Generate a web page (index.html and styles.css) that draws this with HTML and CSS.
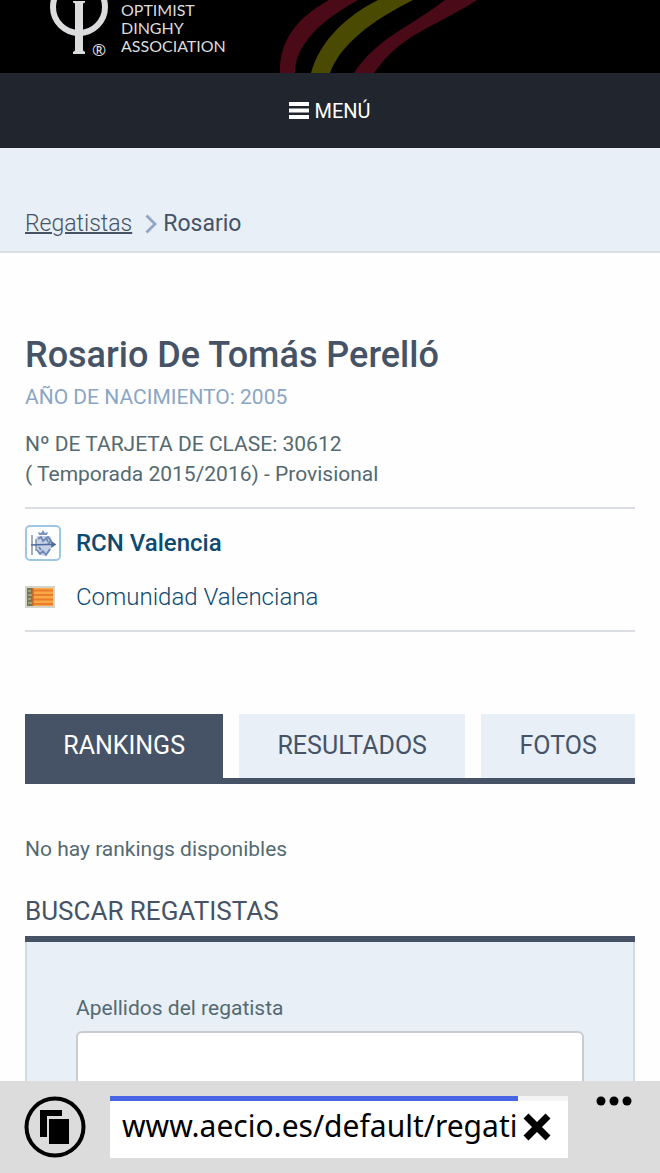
FILE: index.html
```html
<!DOCTYPE html>
<html lang="es">
<head>
<meta charset="utf-8">
<meta name="viewport" content="width=device-width, initial-scale=1">
<title>Rosario De Tomás Perelló</title>
<link rel="stylesheet" href="styles.css">
</head>
<body>
<div class="page">
  <header class="banner">
    <svg class="banner-logo" viewBox="50 0 58 60" aria-hidden="true">
      <ellipse cx="79" cy="7" rx="26" ry="26" fill="none" stroke="#dcdcde" stroke-width="6"/>
      <path d="M73 1h12v1.500l-2 1v47l2 1.500v2H73v-2l2-1.500v-47L73 2.500z" fill="#dcdcde"/>
      <text class="logo-mark" x="92" y="56">®</text>
    </svg>
    <p class="banner-name">OPTIMIST<br>DINGHY<br>ASSOCIATION</p>
    <svg class="banner-stripes" viewBox="9 0 200 73" aria-hidden="true">
      <path d="M10 73C9 40 28 17 59 0H88C50 21 25 45 25 73z" fill="#4b0a17"/>
      <path d="M41 73C50 40 78 15 108 0H143C101 21 70 45 60 73z" fill="#4b4a03"/>
      <path d="M84 73C108 37 136 30 175 0H207C162 29 132 33 104 73z" fill="#4b0a17"/>
    </svg>
  </header>
  <nav class="menu-bar">
    <button class="menu-button" type="button">
      <svg class="menu-icon" viewBox="0 0 20 17" aria-hidden="true"><path d="M0 0h20v4H0zM0 6.500h20v4H0zM0 13h20v4H0z" fill="#fff"/></svg>
      MENÚ
    </button>
  </nav>
  <nav class="breadcrumb" aria-label="Ruta">
    <a class="breadcrumb-link" href="#">Regatistas</a>
    <svg class="breadcrumb-arrow" viewBox="0 0 12 20" aria-hidden="true"><path d="M1.500 1.500l8.500 8.500-8.500 8.500" fill="none" stroke="#8ea6c4" stroke-width="2.800"/></svg>
    <span class="breadcrumb-current">Rosario</span>
  </nav>
  <main class="content">
    <h1 class="name">Rosario De Tomás Perelló</h1>
    <p class="born">AÑO DE NACIMIENTO: 2005</p>
    <p class="card-number">Nº DE TARJETA DE CLASE: 30612<br>( Temporada 2015/2016) - Provisional</p>
    <ul class="clubs">
      <li class="club">
        <svg class="crest" viewBox="0 0 36 36" aria-hidden="true">
          <rect x="1" y="1" width="34" height="34" rx="4" fill="#fff" stroke="#9cc8e4" stroke-width="2"/>
          <path d="M14 10l-1-3 3 1 2-3 2 3 3-1-1 3z" fill="#7d96bd"/>
          <path d="M12 11h13c2 3 3 6 2 10-1 5-4 8-8 10-5-1-8-5-8-10 0-4 0-7 1-10z" fill="#c4d1e5"/>
          <path d="M13 14l3-2 2 4 5-4 3 4-3 3M12 25l3 4 3-3 3 4 4-6M21 12l2 5M14 22l2 3" fill="none" stroke="#6f87b3" stroke-width="1.800"/>
          <path d="M7 10v20M11 14v12" stroke="#8292ac" stroke-width="1.500"/>
          <path d="M6 20l23-.800M27 17.500v4l3-2z" fill="#6580ac" stroke="#4e6b9d" stroke-width="1.500"/>
        </svg>
        <a class="club-name" href="#">RCN Valencia</a>
      </li>
      <li class="club">
        <svg class="flag" viewBox="0 0 30 22" aria-hidden="true">
          <path d="M0 0h30v22H0z" fill="#d3d3c7"/>
          <path d="M2 2h26v18H2z" fill="#f5aa45"/>
          <path d="M8 4.500h20M8 9h20M8 13.500h20M8 18h20" stroke="#ee7b2d" stroke-width="1.800"/>
          <path d="M2 2h6v18H2z" fill="#70775d"/>
          <path d="M3 5h3M3 9h4M3 13h3M3 17h4" stroke="#b4ae7e" stroke-width="1.500"/>
          <path d="M8 2v18" stroke="#d96825" stroke-width="1.500"/>
        </svg>
        <a class="region-name" href="#">Comunidad Valenciana</a>
      </li>
    </ul>
    <div class="tabs" role="tablist">
      <button class="tab tab-active" type="button" role="tab" aria-selected="true">RANKINGS</button>
      <button class="tab" type="button" role="tab" aria-selected="false">RESULTADOS</button>
      <button class="tab" type="button" role="tab" aria-selected="false">FOTOS</button>
    </div>
    <p class="empty">No hay rankings disponibles</p>
    <h2 class="search-title">BUSCAR REGATISTAS</h2>
    <form class="search">
      <label class="search-label" for="surname">Apellidos del regatista</label>
      <input class="search-input" id="surname" type="text">
    </form>
  </main>
</div>
<footer class="browser-bar">
  <button class="round-button" type="button" aria-label="Pestañas">
    <svg class="round-icon" viewBox="0 0 62 62" aria-hidden="true">
      <circle cx="31" cy="31" r="28.500" fill="none" stroke="#000" stroke-width="4"/>
      <path d="M16 14h22v6H23v21h-7z"/>
      <path d="M25 23h20v25H25z"/>
    </svg>
  </button>
  <div class="address">
    <div class="progress"><div class="progress-fill"></div></div>
    <div class="address-row">
      <input class="address-input" type="text" aria-label="Dirección" value="www.aecio.es/default/regati">
      <button class="stop" type="button" aria-label="Detener">
        <svg class="stop-icon" viewBox="0 0 28 28" aria-hidden="true"><path d="M3 3l22 22M25 3L3 25" stroke="#000" stroke-width="7"/></svg>
      </button>
    </div>
  </div>
  <button class="more" type="button" aria-label="Más">
    <svg class="more-icon" viewBox="0 0 36 10" aria-hidden="true"><circle cx="5" cy="5" r="4.500"/><circle cx="18" cy="5" r="4.500"/><circle cx="31" cy="5" r="4.500"/></svg>
  </button>
</footer>
</body>
</html>
```

FILE: styles.css
```css
* {
  box-sizing: border-box;
}

body {
  display: flex;
  flex-direction: column;
  height: 100vh;
  margin: 0;
  background: #fefefe;
  color: #546a72;
  font: 21px/30px Roboto, sans-serif;
}

h1, h2, p, ul {
  margin: 0;
  padding: 0;
}

button, input {
  border: 0;
  margin: 0;
  padding: 0;
  border-radius: 0;
  font: inherit;
}

button {
  background: none;
}

svg {
  display: block;
  flex: none;
}

.page {
  flex: 1;
  min-height: 0;
  overflow: hidden;
}

.banner {
  display: flex;
  height: 73px;
  padding-left: 50px;
  background: #000;
  overflow: hidden;
}

.banner-logo {
  width: 58px;
  height: 60px;
}

.logo-mark {
  fill: #dcdcde;
  font: 17px "Noto Sans", sans-serif;
}

.banner-name {
  flex: none;
  width: 171px;
  padding: 1px 0 0 13px;
  color: #dcdcde;
  font: 16px/18px Lato, sans-serif;
}

.banner-stripes {
  width: 200px;
  height: 73px;
}

.menu-bar {
  display: flex;
  justify-content: center;
  height: 75px;
  background: #21252d;
}

.menu-button {
  display: flex;
  align-items: center;
  gap: 5px;
  color: #fff;
  font-size: 20px;
}

.menu-icon {
  width: 20px;
  height: 17px;
}

.breadcrumb {
  display: flex;
  align-items: center;
  height: 105px;
  padding: 48px 25px 0;
  border-bottom: 2px solid #d8dfe4;
  background: #e8eff7;
  color: #465366;
  font-size: 23px;
}

.breadcrumb-link {
  color: #465366;
  font-weight: 300;
  text-decoration-thickness: 2px;
}

.breadcrumb-arrow {
  width: 12px;
  height: 20px;
  margin: 0 6px 0 13px;
}

.content {
  padding: 80px 25px 0;
}

.name {
  color: #465366;
  font-size: 36px;
  font-weight: 500;
  line-height: 44px;
}

.born {
  margin-top: 5px;
  color: #8aa6c4;
}

.card-number {
  margin-top: 17px;
  padding-bottom: 18px;
}

.clubs {
  padding: 7px 0 6px;
  border: solid #dadee2;
  border-width: 2px 0;
  list-style: none;
}

.club {
  display: grid;
  grid-template-columns: 51px 1fr;
  align-items: center;
  height: 54px;
  font-size: 24px;
}

.crest {
  width: 36px;
  height: 36px;
}

.flag {
  width: 30px;
  height: 22px;
}

.club-name, .region-name {
  color: #0d4a70;
  text-decoration: none;
}

.club-name {
  font-weight: 500;
}

.region-name {
  font-weight: 300;
}

.tabs {
  display: flex;
  gap: 16px;
  margin-top: 82px;
  border-bottom: 6px solid #465366;
}

.tab {
  flex: 1 1 auto;
  height: 64px;
  background: #e8eff7;
  color: #465366;
  font-size: 25px;
}

.tab-active {
  background: #465366;
  color: #fff;
}

.empty {
  margin-top: 50px;
}

.search-title {
  margin-top: 28px;
  padding-bottom: 6px;
  border-bottom: 6px solid #465366;
  color: #465366;
  font-size: 26px;
  font-weight: 400;
  line-height: 38px;
}

.search {
  padding: 51px 49px 40px;
  border: 2px solid #d2dae1;
  border-top: 0;
  background: #e8eff7;
}

.search-label {
  display: block;
}

.search-input {
  display: block;
  width: 100%;
  height: 70px;
  margin-top: 8px;
  padding: 0 16px;
  border: 2px solid #c8ccd0;
  border-radius: 6px;
  background: #fff;
}

.browser-bar {
  display: flex;
  flex: none;
  height: 92px;
  padding: 15px 28px 15px 24px;
  background: #dcdcdc;
}

.round-button {
  width: 62px;
  height: 62px;
}

.round-icon {
  width: 62px;
  height: 62px;
}

.address {
  flex: 1;
  min-width: 0;
  margin: 0 28px 0 24px;
  background: #fff;
}

.progress {
  height: 5px;
  background: #f4f4f4;
}

.progress-fill {
  width: 89%;
  height: 5px;
  background: #4765e4;
}

.address-row {
  display: flex;
  align-items: center;
  height: 52px;
  padding: 0 17px 0 12px;
}

.address-input {
  flex: 1;
  min-width: 0;
  height: 48px;
  padding-bottom: 4px;
  background: transparent;
  color: #000;
  font: 30px "Noto Sans", sans-serif;
}

.stop-icon {
  width: 28px;
  height: 28px;
}

.more {
  align-self: flex-start;
}

.more-icon {
  width: 36px;
  height: 10px;
}
```
